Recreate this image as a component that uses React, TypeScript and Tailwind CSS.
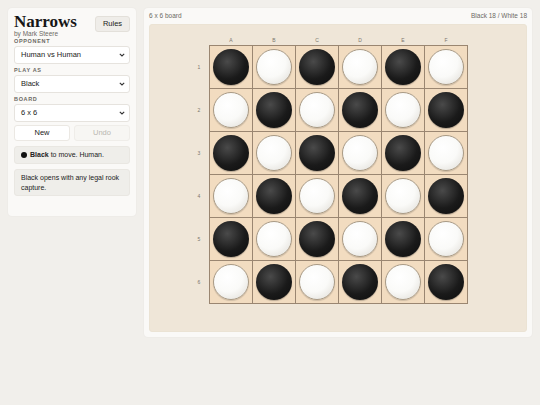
import { useState } from 'react';

type Stone = 'b' | 'w';

const SIZE = 6;
const COLS = ['A', 'B', 'C', 'D', 'E', 'F'];

function makeBoard(): Stone[][] {
  return Array.from({ length: SIZE }, (_, r) =>
    Array.from({ length: SIZE }, (_, c) => ((r + c) % 2 === 0 ? 'b' : 'w')),
  );
}

function Chevron() {
  return (
    <svg width="6" height="4" viewBox="0 0 6 4" className="shrink-0">
      <path d="M0.8 0.8 L3 3 L5.2 0.8" fill="none" stroke="#333" strokeWidth="1.1" />
    </svg>
  );
}

function Field({ label, value }: { label: string; value: string }) {
  return (
    <div className="flex flex-col">
      <div className="text-[5.5px] font-bold tracking-[0.12em] text-[#6b6863] uppercase h-[8px] flex items-center">
        {label}
      </div>
      <div className="mt-[1px] h-[18px] rounded-[3px] border border-[#e6e3de] bg-white flex items-center justify-between pl-[6px] pr-[4px] text-[7.5px] text-[#222]">
        <span>{value}</span>
        <Chevron />
      </div>
    </div>
  );
}

function Piece({ stone }: { stone: Stone }) {
  if (stone === 'b') {
    return (
      <div className="w-[36px] h-[36px] rounded-full bg-[radial-gradient(circle_at_40%_35%,#4a4a4a_0%,#1a1a1a_55%,#0c0c0c_100%)] shadow-[0_1px_1px_rgba(0,0,0,0.25)]" />
    );
  }
  return (
    <div className="w-[36px] h-[36px] rounded-full border border-[#a89a86] bg-[radial-gradient(circle_at_40%_35%,#ffffff_0%,#fafaf8_50%,#dedbd4_100%)] shadow-[0_1px_1px_rgba(0,0,0,0.15)]" />
  );
}

export default function App() {
  const [board] = useState<Stone[][]>(makeBoard);
  const font = { fontFamily: '"Liberation Sans", Arial, sans-serif' };

  return (
    <div className="min-h-screen bg-[#f1efeb] p-2 flex items-start gap-2" style={font}>
      <aside className="w-[128px] bg-[#faf9f7] rounded-[4px] shadow-[0_0_2px_rgba(0,0,0,0.06)] px-[6px] pt-[6px] pb-[20px] flex flex-col">
        <div className="flex items-start justify-between">
          <div className="flex flex-col">
            <div className="text-[17px] leading-[16px] font-bold text-[#161616]" style={{ fontFamily: '"Liberation Serif", "Times New Roman", serif' }}>
              Narrows
            </div>
            <div className="text-[6.5px] leading-[7px] text-[#6d6a65]">by Mark Steere</div>
          </div>
          <button type="button" className="mt-[2px] w-[35px] h-[16px] rounded-[3px] bg-[#efede9] border border-[#e3e0da] text-[7.5px] text-[#222]">
            Rules
          </button>
        </div>

        <div className="flex flex-col gap-[2px]">
          <Field label="Opponent" value="Human vs Human" />
          <Field label="Play as" value="Black" />
          <Field label="Board" value="6 x 6" />
        </div>

        <div className="mt-[3px] grid grid-cols-2 gap-[4px]">
          <button type="button" className="h-[16px] rounded-[3px] bg-white border border-[#ebe8e3] text-[7.5px] text-[#222]">
            New
          </button>
          <button type="button" className="h-[16px] rounded-[3px] bg-[#f7f6f3] border border-[#efede9] text-[7.5px] text-[#b9b6b1]">
            Undo
          </button>
        </div>

        <div className="mt-[5px] h-[18px] rounded-[3px] bg-[#efeeea] border border-[#e9e7e2] flex items-center px-[6px] gap-[3px] text-[7px] text-[#222]">
          <span className="w-[6px] h-[6px] rounded-full bg-[#111] inline-block" />
          <span>
            <b>Black</b> to move. Human.
          </span>
        </div>

        <div className="mt-[5px] rounded-[3px] bg-[#efeeea] border border-[#e9e7e2] px-[6px] py-[3px] text-[7px] leading-[9.5px] text-[#222]">
          Black opens with any legal rook capture.
        </div>
      </aside>

      <main className="w-[388px] bg-[#faf9f7] rounded-[4px] shadow-[0_0_2px_rgba(0,0,0,0.06)] px-[5px] pb-[5px] flex flex-col">
        <div className="h-[16px] flex items-center justify-between text-[6.5px] text-[#6d6a65]">
          <span>6 x 6 board</span>
          <span>Black 18 / White 18</span>
        </div>
        <div className="bg-[#efe6d8] rounded-[3px] border border-[#ebe3d4] pt-[11px] pb-[27px] flex justify-center">
          <div className="flex flex-col">
            <div className="flex ml-[12px] mr-[12px] h-[9px]">
              {COLS.map((c) => (
                <div key={c} className="w-[43px] first:ml-[1px] text-center text-[5px] leading-[8px] text-[#7c766d]">
                  {c}
                </div>
              ))}
            </div>
            <div className="flex">
              <div className="w-[12px] flex flex-col pt-[1px]">
                {board.map((_, r) => (
                  <div key={r} className="h-[43px] flex items-center justify-start pl-[1px] text-[5px] text-[#7c766d]">
                    {r + 1}
                  </div>
                ))}
              </div>
              <div className="border-l border-t border-[#9a8671] bg-[#f2dcc0] grid grid-cols-6">
                {board.map((row, r) =>
                  row.map((s, c) => (
                    <div key={`${r}-${c}`} className="w-[43px] h-[43px] border-r border-b border-[#9a8671] flex items-center justify-center">
                      <Piece stone={s} />
                    </div>
                  )),
                )}
              </div>
              <div className="w-[12px]" />
            </div>
          </div>
        </div>
      </main>
    </div>
  );
}
